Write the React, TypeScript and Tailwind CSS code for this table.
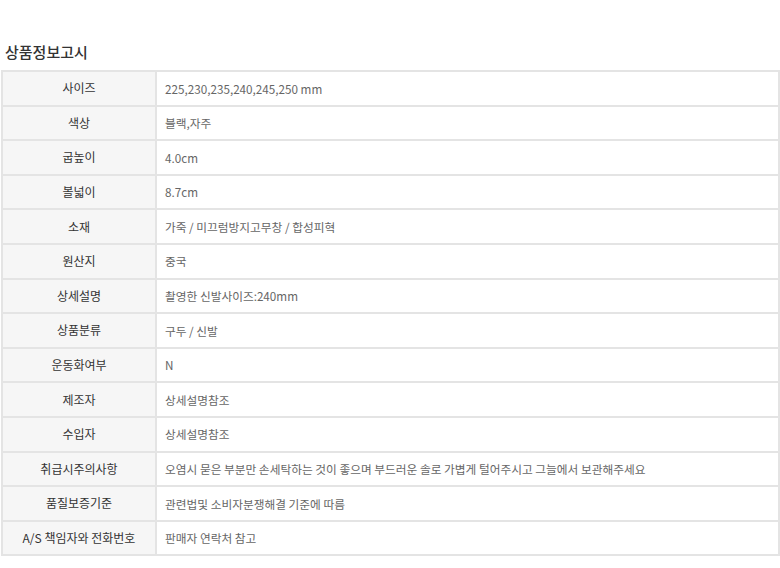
import React from 'react';

type Row = { label: string; value: string };

const rows: Row[] = [
  { label: '사이즈', value: '225,230,235,240,245,250 mm' },
  { label: '색상', value: '블랙,자주' },
  { label: '굽높이', value: '4.0cm' },
  { label: '볼넓이', value: '8.7cm' },
  { label: '소재', value: '가죽 / 미끄럼방지고무창 / 합성피혁' },
  { label: '원산지', value: '중국' },
  { label: '상세설명', value: '촬영한 신발사이즈:240mm' },
  { label: '상품분류', value: '구두 / 신발' },
  { label: '운동화여부', value: 'N' },
  { label: '제조자', value: '상세설명참조' },
  { label: '수입자', value: '상세설명참조' },
  { label: '취급시주의사항', value: '오염시 묻은 부분만 손세탁하는 것이 좋으며 부드러운 솔로 가볍게 털어주시고 그늘에서 보관해주세요' },
  { label: '품질보증기준', value: '관련법및 소비자분쟁해결 기준에 따름' },
  { label: 'A/S 책임자와 전화번호', value: '판매자 연락처 참고' },
];

const App = () => {
  return (
    <div
      className="w-[780px] h-[568px] bg-white pt-[43px] pl-[1px]"
      style={{ fontFamily: '"Noto Sans CJK KR", "Noto Sans", sans-serif' }}
    >
      <h2 className="pl-[4px] h-[27px] text-[15px] leading-[18px] font-medium text-[#333]">상품정보고시</h2>
      <table className="w-[779px] border-collapse border-2 border-[#e4e4e4]">
        <tbody>
          {rows.map((row) => (
            <tr key={row.label} className="h-[34.6px]">
              <th className="w-[154px] bg-[#f6f6f6] border-2 border-[#e4e4e4] text-center text-[12px] font-normal text-[#333] p-0">
                {row.label}
              </th>
              <td className="border-2 border-[#e4e4e4] pl-[8px] text-[11.7px] text-[#666] p-0">
                {row.value}
              </td>
            </tr>
          ))}
        </tbody>
      </table>
    </div>
  );
};

export default App;
